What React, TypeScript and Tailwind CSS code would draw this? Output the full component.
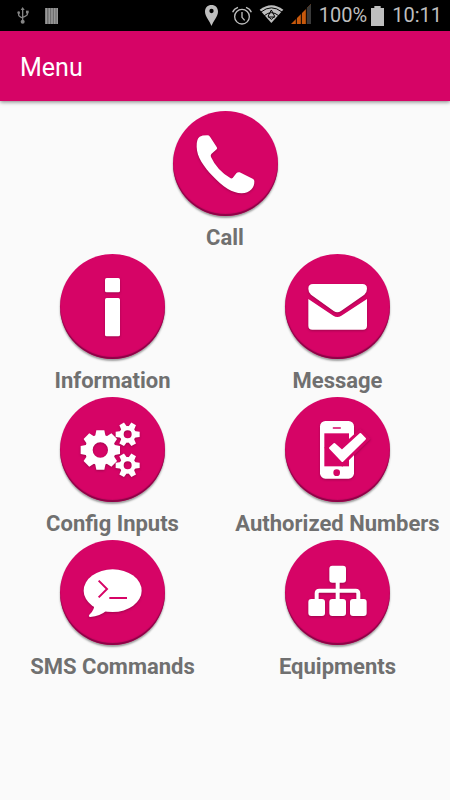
import React from 'react';

const PINK = '#d60466';

interface MenuItem {
  label: string;
  icon: React.ReactNode;
}

function Gear({ cx, cy, outer, root, hole, teeth, base, tip }: {
  cx: number; cy: number; outer: number; root: number; hole: number; teeth: number; base: number; tip: number;
}) {
  return (
    <g transform={`translate(${cx} ${cy})`}>
      <circle r={(root + hole) / 2} fill="none" stroke="white" strokeWidth={root - hole} />
      {Array.from({ length: teeth }, (_, i) => (
        <path
          key={i}
          d={`M${root - 6} ${-base} L${outer} ${-tip} V${tip} L${root - 6} ${base}Z`}
          transform={`rotate(${(360 / teeth) * i})`}
        />
      ))}
    </g>
  );
}

const CALL: MenuItem = {
  label: 'Call',
  icon: (
    <path d="M80 77Q87 73 103 73Q108 73 111 77L131 108Q134 112 131 115L115 129Q112 133 114 138Q132 178 173 202Q176 203 179 201L190 187Q194 182 200 184L239 203Q244 205 244 210C245 230 231 246 206 247C179 247 149 227 119 195C94 168 71 138 71 107Q70 84 80 77Z" />
  ),
};

const ITEMS: MenuItem[] = [
  {
    label: 'Information',
    icon: (
      <>
        <rect x="135" y="72" width="45" height="43" rx="5" />
        <rect x="135" y="132" width="45" height="115" rx="5" />
      </>
    ),
  },
  {
    label: 'Message',
    icon: (
      <>
        <path d="M84 90H232Q246 90 246 104Q246 115 238 122L168 171Q157 179 146 171L78 122Q70 115 70 104Q70 90 84 90Z" />
        <path d="M70 135L145 185Q157 193 169 185L246 135V215Q246 227 234 227H82Q70 227 70 215Z" />
      </>
    ),
  },
  {
    label: 'Config Inputs',
    icon: (
      <>
        <Gear cx={121} cy={159} outer={59} root={46} hole={23} teeth={8} base={16} tip={12} />
        <Gear cx={203} cy={112} outer={36} root={25} hole={12} teeth={6} base={10} tip={8} />
        <Gear cx={203} cy={205} outer={36} root={25} hole={12} teeth={6} base={10} tip={8} />
      </>
    ),
  },
  {
    label: 'Authorized Numbers',
    icon: (
      <>
        <rect x="105" y="72" width="102" height="173" rx="16" />
        <rect x="118" y="109" width="74" height="99" fill={PINK} />
        <rect x="143" y="91" width="25" height="4" rx="2" fill={PINK} />
        <circle cx="155" cy="227" r="10" fill={PINK} />
        <path d="M135 153L148 141L171 161L226 111L240 125L172 192Z" fill={PINK} stroke={PINK} strokeWidth="24" />
        <path d="M135 153L148 141L171 161L226 111L240 125L172 192Z" stroke="white" strokeWidth="6" strokeLinejoin="round" />
      </>
    ),
  },
  {
    label: 'SMS Commands',
    icon: (
      <>
        <ellipse cx="158" cy="152" rx="87" ry="64" />
        <path d="M100 192Q107 207 88 224Q84 230 91 231Q120 229 142 210Z" />
        <path d="M116 122L141 147L116 172M148 174H201" fill="none" stroke={PINK} strokeWidth="6" />
      </>
    ),
  },
  {
    label: 'Equipments',
    icon: (
      <>
        <rect x="133" y="77" width="50" height="51" rx="9" />
        <rect x="70" y="177" width="50" height="51" rx="9" />
        <rect x="133" y="177" width="50" height="51" rx="9" />
        <rect x="195" y="177" width="50" height="51" rx="9" />
        <path d="M95 182V160Q95 152 103 152H212Q220 152 220 160V182M158 120V182" fill="none" stroke="white" strokeWidth="12" />
      </>
    ),
  },
];

function MenuButton({ label, icon }: MenuItem) {
  return (
    <button type="button" className="flex w-full flex-col items-center pb-px">
      <span className="block h-[105px] w-[105px] rounded-full bg-[#d60466] shadow-[inset_0_-2px_1px_#8a0446,0_2px_2px_#9d9d9d]">
        <svg viewBox="0 0 315 315" fill="white" className="h-full w-full drop-shadow-[0_1px_1px_#a0054d]" aria-hidden="true">
          {icon}
        </svg>
      </span>
      <span className="mt-[7px] whitespace-nowrap text-[22px] leading-[30px] font-bold text-[#707070]">{label}</span>
    </button>
  );
}

function StatusBar() {
  return (
    <div className="flex h-[31px] items-center justify-between bg-black pr-2 pl-[17px] text-[20px] leading-[31px] text-[#bebebe]">
      <div className="flex items-center gap-4">
        {/* USB */}
        <svg viewBox="0 0 36 51" className="h-[17px] w-3" fill="#858585" stroke="#858585" aria-hidden="true">
          <path d="M17 6V42M5 18V24Q5 28 17 33M31 16V22Q31 26 17 31" fill="none" strokeWidth="4" />
          <path d="M17 0L23 9H11Z" stroke="none" />
          <circle cx="17" cy="44" r="6" stroke="none" />
          <circle cx="5" cy="17" r="4" stroke="none" />
          <rect x="27" y="11" width="8" height="8" stroke="none" />
        </svg>
        {/* Barcode */}
        <svg viewBox="0 0 39 48" className="h-4 w-[13px]" aria-hidden="true">
          <rect width="39" height="48" fill="#686868" />
          <path d="M4 0V48M13 0V48M21 0V48M29 0V48M37 0V48" stroke="#989898" strokeWidth="5" />
        </svg>
      </div>

      <div className="flex items-center">
        {/* Location */}
        <svg viewBox="0 0 39 63" className="h-[21px] w-[13px]" fill="#bebebe" aria-hidden="true">
          <path d="M19.500 0C8 0 0 8 0 20C0 34 14 47 19.500 63C25 47 39 34 39 20C39 8 31 0 19.500 0Z" />
          <circle cx="19.500" cy="18" r="6.500" fill="black" />
        </svg>
        {/* Alarm */}
        <svg viewBox="0 0 60 57" className="ml-3.5 h-[19px] w-5" fill="none" stroke="#bebebe" strokeWidth="4" aria-hidden="true">
          <circle cx="30" cy="32" r="22" />
          <path d="M30 18V34L38 43M2 19Q6 8 18 4M58 19Q54 8 42 4" />
        </svg>
        {/* Wi-Fi */}
        <svg viewBox="0 0 75 54" className="mb-1 ml-[7px] h-[18px] w-[25px]" aria-hidden="true">
          <path d="M2 14Q37 -13 73 14L37 54Z" fill="#bebebe" />
          <path d="M6 21Q37 -4 69 21M16 32Q37 14 59 32" fill="none" stroke="black" strokeWidth="3" />
          <path d="M37 15L47 34L37 43L27 34Z" fill="none" stroke="black" strokeWidth="3" />
          <path d="M27 36H48" stroke="black" strokeWidth="3" />
        </svg>
        {/* Signal */}
        <svg viewBox="0 0 60 60" className="mb-1 ml-[7px] h-5 w-5" aria-hidden="true">
          <path d="M0 60L60 0V60Z" fill="#c8590c" />
          <path d="M47 13L60 0V60H47Z" fill="#3a3a3a" />
          <path d="M16 40V60M31 26V60M46 10V60" stroke="black" strokeWidth="3" />
        </svg>
        <span className="ml-2">100%</span>
        {/* Battery */}
        <svg viewBox="0 0 39 60" className="ml-1 h-5 w-[13px]" fill="#bebebe" aria-hidden="true">
          <path d="M10 0H29V6H39V60H0V6H10Z" />
        </svg>
        <span className="ml-2">10:11</span>
      </div>
    </div>
  );
}

export default function App() {
  return (
    <div className="min-h-screen bg-[#fafafa] font-[Roboto,'Liberation_Sans',sans-serif]">
      <StatusBar />
      <header className="flex h-[70px] items-center bg-[#d60466] px-5 shadow-[0_1px_4px_#00000080]">
        <h1 className="mt-1 text-[25px] leading-8 text-white">Menu</h1>
      </header>

      <main className="pt-2.5">
        <div className="flex justify-center">
          <div className="w-1/2">
            <MenuButton {...CALL} />
          </div>
        </div>
        <div className="grid grid-cols-2">
          {ITEMS.map((item) => (
            <MenuButton key={item.label} {...item} />
          ))}
        </div>
      </main>
    </div>
  );
}
